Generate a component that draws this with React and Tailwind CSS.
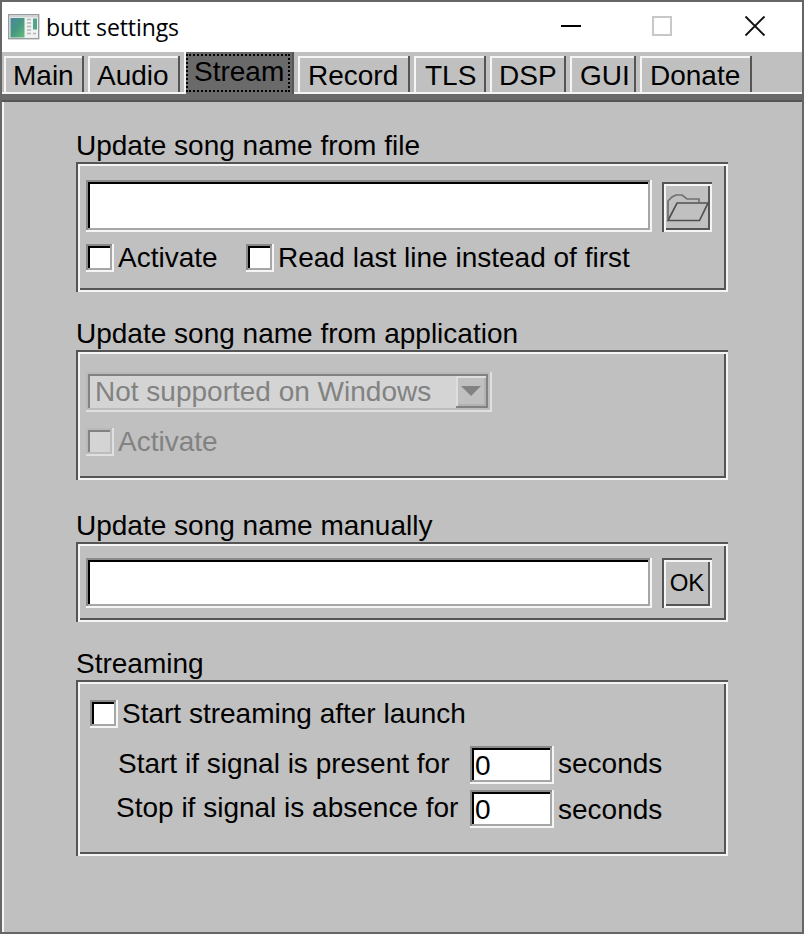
import React from "react";

const ENGRAVED =
  "shadow-[inset_2px_0_#555,inset_0_2px_#555,inset_0_-2px_#f5f5f5,inset_-2px_0_#f5f5f5,inset_4px_0_#f5f5f5,inset_0_4px_#f5f5f5,inset_-4px_0_#555,inset_0_-4px_#555]";
const SUNKEN =
  "bg-white shadow-[inset_-2px_0_#f5f5f5,inset_0_-2px_#f5f5f5,inset_2px_0_#8a8a8a,inset_0_2px_#8a8a8a,inset_-4px_0_#a6a6a6,inset_0_-4px_#a6a6a6,inset_4px_0_#000,inset_0_4px_#000]";
const SUNKEN_OFF =
  "bg-[#d4d4d4] shadow-[inset_-2px_0_#e0e0e0,inset_0_-2px_#e0e0e0,inset_2px_0_#b9b9b9,inset_0_2px_#b9b9b9,inset_-4px_0_#bcbcbc,inset_0_-4px_#bcbcbc,inset_4px_0_#828282,inset_0_4px_#828282]";

const TABS = [
  { name: "Main", box: "w-[80px] mr-[4px] pl-[9px]" },
  { name: "Audio", box: "w-[92px] mr-[4px] pl-[9px]" },
  { name: "Stream", active: true },
  { name: "Record", box: "w-[112px] ml-[4px] mr-[4px] pl-[10px]" },
  { name: "TLS", box: "w-[72px] mr-[4px] pl-[11px]" },
  { name: "DSP", box: "w-[76px] mr-[4px] pl-[9px]" },
  { name: "GUI", box: "w-[66px] mr-[4px] pl-[10px]" },
  { name: "Donate", box: "w-[112px] pl-[10px]" },
];

function Tab({ name, box, active }) {
  if (active) {
    return (
      <div className="flex h-[42px] w-[110px] border-l-2 border-[#f5f5f5] bg-[#6a6a6a] pt-[2px] shadow-[inset_-2px_0_#555]">
        <div className="h-[38px] w-[104px] border-2 border-dotted border-black pl-[6px] leading-[32px]">
          {name}
        </div>
      </div>
    );
  }
  return (
    <div
      className={
        "mt-[4px] h-[36px] pt-[4px] leading-[32px] shadow-[inset_-2px_0_#555,inset_2px_0_#f5f5f5,inset_0_2px_#f5f5f5] " +
        box
      }
    >
      {name}
    </div>
  );
}

function Check({ off, label, className = "" }) {
  return (
    <div className={"flex h-[28px] items-center " + className}>
      <span className={"mr-[4px] size-[28px] shrink-0 " + (off ? SUNKEN_OFF : SUNKEN)} />
      <span className={"leading-[28px] " + (off ? "text-[#828282]" : "")}>{label}</span>
    </div>
  );
}

function Group({ title, className, children }) {
  return (
    <section>
      <h2 className="h-[32px] leading-[32px]">{title}</h2>
      <div className={"w-[652px] " + ENGRAVED + " " + className}>{children}</div>
    </section>
  );
}

function TitleBar() {
  return (
    <header className="flex h-[50px] items-center bg-white pl-[6px]">
      <svg width="32" height="26" viewBox="0 0 32 26" className="shrink-0">
        <defs>
          <linearGradient id="pane" x1="0" y1="0" x2="1" y2="1">
            <stop offset="0" stopColor="#4a86a0" />
            <stop offset=".5" stopColor="#46987f" />
            <stop offset="1" stopColor="#63bd7d" />
          </linearGradient>
        </defs>
        <rect x=".7" y=".7" width="30" height="24" fill="#f1f1f1" stroke="#9a9da0" strokeWidth="1.4" />
        <rect x="1.4" y="1.4" width="28.6" height="2" fill="#cfd3d6" />
        <rect x="2.5" y="4" width="14" height="19.5" fill="url(#pane)" />
        <path d="M19 5.5h4M19 9h4M19 12.500h4M19 16h4M19 19.500h4M25 19.500h3" stroke="#b3b6b8" strokeWidth="1.300" />
        <rect x="25" y="4.500" width="4" height="11" fill="#52a58a" />
      </svg>
      <h1 className="ml-[6px] font-['Open_Sans',sans-serif] text-[23px] leading-[32px] tracking-[-0.1px]">
        butt settings
      </h1>
      <svg width="206" height="22" viewBox="0 0 206 22" fill="none" className="mb-[2px] ml-auto mr-[36px]">
        <path d="M1 11h20" stroke="#000" strokeWidth="2" />
        <rect x="93" y="2" width="18" height="18" stroke="#c8c8c8" strokeWidth="2" />
        <path d="M185.500 1.500l19 19M204.500 1.500l-19 19" stroke="#111" strokeWidth="1.900" />
      </svg>
    </header>
  );
}

export default function App() {
  return (
    <div className="h-[934px] w-[804px] overflow-hidden whitespace-nowrap border-2 border-[#666] bg-[#c0c0c0] font-['Liberation_Sans',Arial,sans-serif] text-[28px] text-black">
      <TitleBar />
      <nav className="flex h-[42px] pl-[2px] shadow-[inset_0_-2px_#f5f5f5]">
        {TABS.map((t) => (
          <Tab key={t.name} {...t} />
        ))}
      </nav>
      <div className="h-[8px] border-b-2 border-[#555] bg-[#6a6a6a]" />
      <main className="h-[830px] border-l-2 border-[#f5f5f5] pl-[72px] pt-[28px]">
        <Group title="Update song name from file" className="h-[130px] pl-[10px] pt-[18px]">
          <div className="flex items-end gap-[10px]">
            <div className={"h-[52px] w-[566px] " + SUNKEN} />
            <div className={"flex size-[50px] items-center justify-center " + ENGRAVED}>
              <svg width="50" height="50" viewBox="0 0 50 50" fill="none" strokeWidth="1.700">
                <path d="M6 37V19l4-4 4-2h6l5 4h12v3" stroke="#707070" />
                <path d="M15 21h31l-8.500 17.500H6z" stroke="#505050" />
              </svg>
            </div>
          </div>
          <div className="mt-[12px] flex">
            <Check label="Activate" className="w-[160px]" />
            <Check label="Read last line instead of first" />
          </div>
        </Group>

        <div className="h-[26px]" />
        <Group title="Update song name from application" className="h-[130px] pl-[10px] pt-[22px]">
          <div className={"flex h-[40px] w-[406px] justify-between p-[4px] text-[#828282] " + SUNKEN_OFF}>
            <span className="pl-[5px] leading-[32px]">Not supported on Windows</span>
            <span className="flex size-[32px] items-center justify-center bg-[#c0c0c0] shadow-[inset_-2px_0_#828282,inset_0_-2px_#828282,inset_2px_0_#dedede,inset_0_2px_#dedede,inset_-4px_0_#b2b2b2,inset_0_-4px_#b2b2b2]">
              <svg width="20" height="10" viewBox="0 0 20 10" className="mb-[2px] mr-[2px]">
                <path d="M0 0h20L10 10z" fill="#828282" />
              </svg>
            </span>
          </div>
          <Check off label="Activate" className="mt-[16px]" />
        </Group>

        <div className="h-[30px]" />
        <Group title="Update song name manually" className="h-[80px] pl-[10px] pt-[16px]">
          <div className="flex gap-[10px]">
            <div className={"h-[50px] w-[566px] " + SUNKEN} />
            <div className={"flex size-[50px] justify-center text-[24px] leading-[50px] " + ENGRAVED}>OK</div>
          </div>
        </Group>

        <div className="h-[26px]" />
        <Group title="Streaming" className="h-[176px] pl-[14px] pt-[20px]">
          <Check label="Start streaming after launch" />
          <div className="mt-[18px] flex h-[38px]">
            <span className="w-[380px] pl-[28px] leading-[36px]">Start if signal is present for</span>
            <span className={"w-[84px] pl-[5px] leading-[40px] " + SUNKEN}>0</span>
            <span className="pl-[4px] leading-[36px]">seconds</span>
          </div>
          <div className="mt-[6px] flex h-[38px]">
            <span className="w-[380px] pl-[26px] leading-[36px]">Stop if signal is absence for</span>
            <span className={"w-[84px] pl-[5px] leading-[40px] " + SUNKEN}>0</span>
            <span className="pl-[4px] leading-[39px]">seconds</span>
          </div>
        </Group>
      </main>
    </div>
  );
}
